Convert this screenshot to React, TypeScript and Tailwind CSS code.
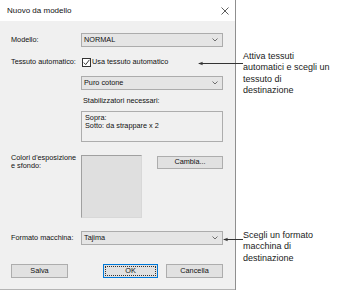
import type { ReactNode } from "react";

function Chevron() {
  return (
    <svg width="6" height="4" viewBox="0 0 6 4" className="shrink-0" aria-hidden>
      <path d="M0.5 0.5 L3 3 L5.5 0.5" fill="none" stroke="#606060" strokeWidth="0.9" />
    </svg>
  );
}

function Combo({ value }: { value: string }) {
  return (
    <div className="flex h-[14px] w-[142px] items-center justify-between border border-[#acacac] bg-[#e5e5e5] pl-[2px] pr-[4px]">
      <span className="leading-none">{value}</span>
      <Chevron />
    </div>
  );
}

function Button({ children, primary }: { children: ReactNode; primary?: boolean }) {
  return (
    <div
      className={
        primary
          ? "flex h-[14px] w-[55px] items-center justify-center border border-[#0078d7] bg-[#e1e1e1] p-[1px]"
          : "flex h-[14px] w-[57px] items-center justify-center border border-[#adadad] bg-[#e1e1e1]"
      }
    >
      {primary ? (
        <div className="flex h-full w-full items-center justify-center border border-dotted border-[#333]">
          {children}
        </div>
      ) : (
        children
      )}
    </div>
  );
}

function Arrow({ width }: { width: number }) {
  return (
    <svg width={width} height="7" viewBox={`0 0 ${width} 7`} aria-hidden>
      <line x1="2" y1="3.5" x2={width} y2="3.5" stroke="#333" strokeWidth="1" />
      <path d="M1 3.5 L6 1.8 L5 3.5 L6 5.2 Z" fill="#333" />
    </svg>
  );
}

export default function App() {
  return (
    <div className="relative h-[294px] w-[358px] overflow-hidden bg-white font-['Liberation_Sans',Arial,sans-serif] text-[7.3px] text-[#111]">
      <div className="flex w-[236px] flex-col border-r border-[#8f8f8f]">
        <div className="flex h-[21px] items-center justify-between bg-white pl-[7px] pr-[6px] text-[8px]">
          <span>Nuovo da modello</span>
          <svg width="8" height="8" viewBox="0 0 8 8" aria-hidden>
            <path d="M0.5 0.5 L7.5 7.5 M7.5 0.5 L0.5 7.5" stroke="#333" strokeWidth="0.8" />
          </svg>
        </div>

        <div className="flex h-[269px] flex-col border-b border-[#b4b4b4] bg-[#f0f0f0] pl-[11px] pt-[12px]">
          <div className="flex items-center">
            <span className="w-[70px]">Modello:</span>
            <Combo value="NORMAL" />
          </div>

          <div className="mt-[11px] flex h-[9px] items-center">
            <span className="w-[71px] whitespace-nowrap">Tessuto automatico:</span>
            <div className="flex h-[9px] w-[9px] items-center justify-center border border-[#333] bg-white">
              <svg width="7" height="7" viewBox="0 0 7 7" aria-hidden>
                <path d="M0.8 3.6 L2.7 5.6 L6.4 0.8" fill="none" stroke="#222" strokeWidth="0.9" />
              </svg>
            </div>
            <span className="ml-[1px]">Usa tessuto automatico</span>
          </div>

          <div className="mt-[9px] flex">
            <span className="w-[70px]" />
            <Combo value="Puro cotone" />
          </div>

          <div className="mt-[7px] flex">
            <span className="w-[72px]" />
            <span className="leading-[8px]">Stabilizzatori necessari:</span>
          </div>

          <div className="mt-[6px] flex">
            <span className="w-[70px]" />
            <div className="h-[31px] w-[142px] border border-[#adadad] bg-[#f0f0f0] px-[3px] pt-[2px] leading-[7.5px]">
              <div>Sopra:</div>
              <div>Sotto: da strappare x 2</div>
            </div>
          </div>

          <div className="mt-[13px] flex items-start">
            <span className="-mt-[1px] w-[70px] leading-[8px]">
              Colori d'esposizione
              <br />e sfondo:
            </span>
            <div className="h-[63px] w-[61px] border border-[#a0a0a0] border-b-[#d8d8d8] border-r-[#d8d8d8] bg-[#dfdfdf]" />
            <div className="ml-[15px] mt-[1px] flex h-[13px] w-[66px] items-center justify-center border border-[#adadad] bg-[#e1e1e1]">
              Cambia...
            </div>
          </div>

          <div className="mt-[13px] flex items-center">
            <span className="w-[70px]">Formato macchina:</span>
            <Combo value="Tajima" />
          </div>

          <div className="mt-[19px] flex">
            <Button>Salva</Button>
            <div className="ml-[35px]">
              <Button primary>OK</Button>
            </div>
            <div className="ml-[8px]">
              <Button>Cancella</Button>
            </div>
          </div>
        </div>
      </div>

      <div className="absolute left-[197px] top-[60px]">
        <Arrow width={46} />
      </div>
      <div className="absolute left-[243px] top-[51px] text-[9px] leading-[11.3px] text-[#1a1a1a]">
        Attiva tessuti
        <br />
        automatici e scegli un
        <br />
        tessuto di
        <br />
        destinazione
      </div>

      <div className="absolute left-[222px] top-[236px]">
        <Arrow width={21} />
      </div>
      <div className="absolute left-[243px] top-[230px] text-[9px] leading-[11.3px] text-[#1a1a1a]">
        Scegli un formato
        <br />
        macchina di
        <br />
        destinazione
      </div>
    </div>
  );
}
